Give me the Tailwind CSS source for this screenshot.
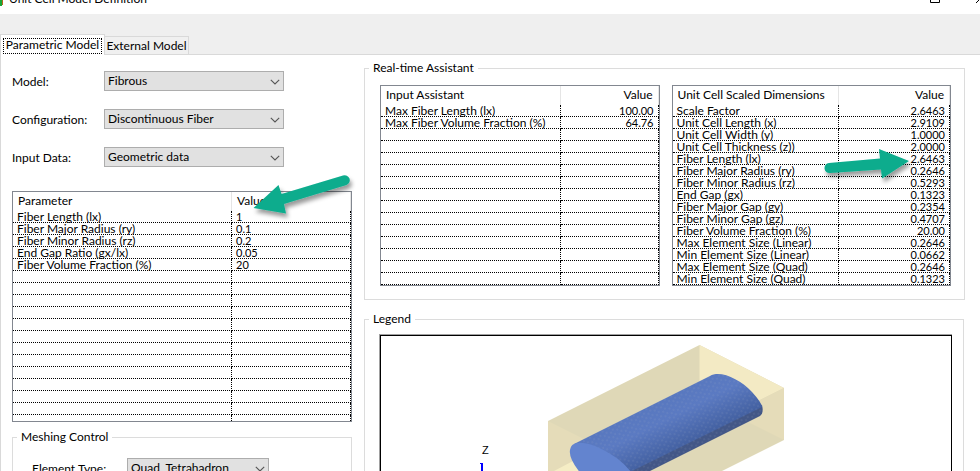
<!DOCTYPE html>
<html lang="en">
<head>
<meta charset="utf-8">
<title>Unit Cell Model Definition</title>
<script src="https://cdn.jsdelivr.net/npm/@tailwindcss/browser@4"></script>
</head>
<body class="relative h-screen overflow-hidden bg-[#efefef] font-[Lato,'Liberation_Sans',sans-serif] text-xs text-black">
<header class="flex h-[14px] items-end bg-white">
  <div class="flex flex-1 items-start self-start">
    <svg class="h-[6px] w-1" viewBox="0 0 4 6"><path fill="#17a535" d="M0 0h2v6H0z"/><path fill="#b5651d" d="M2 0h1v5H2z"/></svg>
    <h1 class="-mt-[7px] ml-[5px] leading-3">Unit Cell Model Definition</h1>
  </div>
  <button aria-label="Maximize" class="mr-9 self-start"><svg class="h-[3px] w-[10px]" viewBox="0 0 10 3"><path fill="none" stroke="#000" d="M.5 0v2.5h9V0"/></svg></button>
  <button aria-label="Close" class="self-start"><svg class="h-[3px] w-1" viewBox="0 0 4 3"><path fill="none" stroke="#000" d="M0 3 3 0"/></svg></button>
</header>
<nav class="relative flex h-[41px] items-end">
  <button class="z-10 h-[21px] w-[105px] border border-b-0 border-[#d9d9d9] bg-white px-[2px] pt-[2px]"><span class="flex h-4 items-center justify-center border border-dotted border-black pb-[2px] whitespace-nowrap">Parametric Model</span></button>
  <button class="h-[19px] w-[84px] border border-l-0 border-[#d9d9d9] bg-[#f0f0f0] whitespace-nowrap">External Model</button>
  <div class="flex-1 border-b border-[#d9d9d9]"></div>
</nav>
<main class="flex h-[calc(100vh-55px)] overflow-hidden border-l border-[#d9d9d9] bg-white">
  <section class="ml-[11px] w-[340px] shrink-0 pt-4">
    <div id="choices" class="flex flex-col gap-[18px]"></div>
    <div id="params" class="mt-6 h-[231px] border border-[#828790]"></div>
    <fieldset class="mt-[9px] h-20 border border-[#dcdcdc] px-[19px] pt-[15px]">
      <legend class="-ml-[15px] px-1 leading-3">Meshing Control</legend>
      <div class="flex items-center"><label for="etype" class="w-[95px] pt-[2px]">Element Type:</label>
        <span class="relative block w-[142px]"><select id="etype" class="block h-5 w-full appearance-none border border-[#adadad] bg-[#e1e1e1] pl-[3px]"><option>Quad_Tetrahadron</option></select><svg class="pointer-events-none absolute top-2 right-1 h-[6px] w-[10px]" viewBox="0 0 10 6"><path d="M.8.8 5 5 9.200.8" fill="none" stroke="#555" stroke-width="1.100"/></svg></span></div>
    </fieldset>
  </section>
  <section class="mr-[15px] ml-3 min-w-0 flex-1 pt-[7px]">
    <fieldset class="flex h-[238px] gap-3 border border-[#dcdcdc] pt-[11px] pr-[13px] pl-[15px]">
      <legend class="-ml-[11px] px-1 leading-3">Real-time Assistant</legend>
      <div id="assist" class="h-[201px] flex-1 border border-[#828790]"></div>
      <div id="scaled" class="h-[201px] flex-1 border border-[#828790]"></div>
    </fieldset>
    <fieldset class="mt-[13px] mr-px h-[300px] border border-[#dcdcdc] pt-[9px] pr-[11px] pl-[14px]">
      <legend class="-ml-[10px] px-1 leading-3">Legend</legend>
      <div class="border-t border-l border-[#a0a0a0]"><div class="h-[270px] border border-black">
        <svg class="block h-[200px] w-[570px]" viewBox="381 336 570 200" role="img" aria-label="Unit cell with a fiber">
          <defs><pattern id="mesh" width="7" height="5" patternUnits="userSpaceOnUse" patternTransform="rotate(-27)"><path d="M0 1h2M4 3h2" stroke="#a9b6c8" stroke-opacity=".3" stroke-width=".7"/></pattern>
          <linearGradient id="body" gradientUnits="userSpaceOnUse" x1="660" y1="385" x2="690" y2="445"><stop offset="0" stop-color="#5777bd"/><stop offset=".5" stop-color="#5b7ac2"/><stop offset="1" stop-color="#425f9f"/></linearGradient></defs>
          <path fill="#dfd8b7" d="M548 421 699.500 345 784 388V440L640 512 548 480z"/>
          <path fill="#f3eac4" d="M699.500 345 784 388 762 399 699.500 430z"/>
          <path fill="#e5dcb9" d="M784 388V440L744 420V408z"/>
          <path fill="#e5dcb9" d="M548 421 640 467V500H548z"/>
          <path fill="#f5edc5" d="M554 471 573 461 595 471z"/>
          <path fill="#435787" d="M762 405Q764 413 760 416L640 476 620 475 690 434z"/>
          <path fill="url(#body)" d="M574 444 710 376C720 370 740 379 752 392Q762 403 762 407L632 471 605 476z"/>
          <path fill="url(#mesh)" d="M576 443 710 376C720 370 739 378 752 393Q763 405 762 414L640 476z"/>
          <path fill="#6384cf" d="M574 444C586 439 606 451 618 459Q628 467 633 475V484H590Q568 461 570 450 571 445 574 444z"/>
          <path d="M482 463V480" stroke="#00f" stroke-width="2"/><path d="M480 463.500h3" stroke="#00f"/>
          <text x="482" y="454" class="font-['Liberation_Sans',sans-serif] text-[11px]">Z</text>
        </svg>
      </div></div>
    </fieldset>
  </section>
</main>
<svg class="pointer-events-none absolute top-0 left-0 h-[471px] w-[980px]" viewBox="0 0 980 471" aria-hidden="true">
  <defs><filter id="sh" x="-20%" y="-40%" width="140%" height="200%"><feDropShadow dx="2" dy="4" stdDeviation="2" flood-opacity=".4"/></filter></defs>
  <g fill="#0aac8d" filter="url(#sh)">
    <path d="M253.500 208 278.500 185 281.500 194 343 175.500A5 5 0 0 1 346.500 185L284 204 286 213.500z"/>
    <path d="M909 161 879 149 880 158.500 829 163A5 5 0 0 0 830 173L881 169.500 882 178.500z"/>
  </g>
</svg>
<script>
const choices = [['Model:', 'Fibrous'], ['Configuration:', 'Discontinuous Fiber'], ['Input Data:', 'Geometric data']];
document.getElementById('choices').innerHTML = choices.map(([l, v], i) => `<div class="flex h-5 items-center"><label for="c${i}" class="w-[92px] pt-[2px]">${l}</label><span class="relative block w-[180px]"><select id="c${i}" class="block h-5 w-full appearance-none border border-[#adadad] bg-[#e1e1e1] pl-[3px]"><option>${v}</option></select><svg class="pointer-events-none absolute top-2 right-1 h-[6px] w-[10px]" viewBox="0 0 10 6"><path d="M.8.8 5 5 9.200.8" fill="none" stroke="#555" stroke-width="1.100"/></svg></span></div>`).join('');
function grid(id, head, rows, total, firstCol, align) {
  const all = [...rows, ...Array(total - rows.length).fill(['', ''])];
  document.getElementById(id).innerHTML = `<table class="h-full w-full table-fixed border-separate border-spacing-0 leading-[11px]">
  <thead><tr class="h-[19px]"><th class="${firstCol} border-r border-[#e5e5e5] pb-[2px] pl-[5px] text-left font-normal whitespace-nowrap">${head}</th><th class="border-r border-[#e5e5e5] px-[5px] pb-[2px] font-normal ${align}">Value</th></tr></thead>
  <tbody>${all.map(([a, b]) => `<tr class="h-3"><td class="h-3 border-r border-b border-dotted border-black p-0 pl-1 whitespace-nowrap">${a}</td><td class="h-3 border-r border-b border-dotted border-black p-0 px-1 text-[11px] ${align}">${b}</td></tr>`).join('')}
  ${id === 'params' ? '<tr><td class="border-r border-dotted border-black p-0"></td><td class="border-r border-dotted border-black p-0"></td></tr>' : ''}</tbody></table>`;
}
grid('params', 'Parameter', [['Fiber Length (lx)', '1'], ['Fiber Major Radius (ry)', '0.1'], ['Fiber Minor Radius (rz)', '0.2'], ['End Gap Ratio (gx/lx)', '0.05'], ['Fiber Volume Fraction (%)', '20']], 17, 'w-[219px]', 'text-left');
grid('assist', 'Input Assistant', [['Max Fiber Length (lx)', '100.00'], ['Max Fiber Volume Fraction (%)', '64.76']], 15, 'w-[180px]', 'text-right');
grid('scaled', 'Unit Cell Scaled Dimensions', [['Scale Factor', '2.6463'], ['Unit Cell Length (x)', '2.9109'], ['Unit Cell Width (y)', '1.0000'], ['Unit Cell Thickness (z))', '2.0000'], ['Fiber Length (lx)', '2.6463'], ['Fiber Major Radius (ry)', '0.2646'], ['Fiber Minor Radius (rz)', '0.5293'], ['End Gap (gx)', '0.1323'], ['Fiber Major Gap (gy)', '0.2354'], ['Fiber Minor Gap (gz)', '0.4707'], ['Fiber Volume Fraction (%)', '20.00'], ['Max Element Size (Linear)', '0.2646'], ['Min Element Size (Linear)', '0.0662'], ['Max Element Size (Quad)', '0.2646'], ['Min Element Size (Quad)', '0.1323']], 15, 'w-[166px]', 'text-right');
</script>
</body>
</html>
